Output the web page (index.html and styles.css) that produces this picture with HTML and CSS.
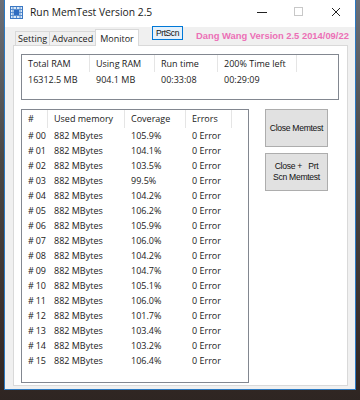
FILE: index.html
```html
<!DOCTYPE html>
<html lang="en">
<head>
<meta charset="UTF-8">
<title>Run MemTest Version 2.5</title>
<link rel="stylesheet" href="styles.css">
</head>
<body>
	<div class="window">
		<div class="titlebar">
			<svg class="app-icon" width="13" height="13" viewBox="0 0 13 13">
				<rect x="0.5" y="0.5" width="12" height="12" fill="#dbe9f7" stroke="#3b78c4"/>
				<path d="M3 1v11M6.5 1v11M10 1v11M1 3.5h11M1 6.5h11M1 9.5h11" stroke="#5b8fd0" stroke-width="1"/>
				<rect x="4" y="4" width="5" height="5" fill="#2f6cc0"/>
			</svg>
			<span class="title">Run MemTest Version 2.5</span>
			<div class="controls">
				<svg width="10" height="10" viewBox="0 0 10 10"><path d="M0 5.5h10" stroke="#222" stroke-width="1"/></svg>
				<svg width="10" height="10" viewBox="0 0 10 10"><rect x="0.5" y="0.5" width="8" height="8" fill="none" stroke="#c8c8c8"/></svg>
				<svg width="10" height="10" viewBox="0 0 10 10"><path d="M1 1l8 8M9 1l-8 8" stroke="#222" stroke-width="1"/></svg>
			</div>
		</div>

		<div class="client">
			<div class="tabrow">
				<div class="tabs">
					<div class="tab">Setting</div>
					<div class="tab">Advanced</div>
					<div class="tab active">Monitor</div>
				</div>
				<button class="prtscn">PrtScn</button>
				<span class="version">Dang Wang Version 2.5 2014/09/22</span>
			</div>

			<div class="panel">
				<div class="info">
					<div class="info-head">
						<span>Total RAM</span><span>Using RAM</span><span>Run time</span><span>200% Time left</span><span></span>
					</div>
					<div class="info-vals">
						<span>16312.5 MB</span><span>904.1 MB</span><span>00:33:08</span><span>00:29:09</span><span></span>
					</div>
				</div>

				<div class="lower">
					<div class="list">
						<div class="list-head">
							<span>#</span><span>Used memory</span><span>Coverage</span><span>Errors</span><span></span>
						</div>
						<div class="row"><span># 00</span><span>882 MBytes</span><span>105.9%</span><span>0 Error</span></div>
						<div class="row"><span># 01</span><span>882 MBytes</span><span>104.1%</span><span>0 Error</span></div>
						<div class="row"><span># 02</span><span>882 MBytes</span><span>103.5%</span><span>0 Error</span></div>
						<div class="row"><span># 03</span><span>882 MBytes</span><span>99.5%</span><span>0 Error</span></div>
						<div class="row"><span># 04</span><span>882 MBytes</span><span>104.2%</span><span>0 Error</span></div>
						<div class="row"><span># 05</span><span>882 MBytes</span><span>106.2%</span><span>0 Error</span></div>
						<div class="row"><span># 06</span><span>882 MBytes</span><span>105.9%</span><span>0 Error</span></div>
						<div class="row"><span># 07</span><span>882 MBytes</span><span>106.0%</span><span>0 Error</span></div>
						<div class="row"><span># 08</span><span>882 MBytes</span><span>104.2%</span><span>0 Error</span></div>
						<div class="row"><span># 09</span><span>882 MBytes</span><span>104.7%</span><span>0 Error</span></div>
						<div class="row"><span># 10</span><span>882 MBytes</span><span>105.1%</span><span>0 Error</span></div>
						<div class="row"><span># 11</span><span>882 MBytes</span><span>106.0%</span><span>0 Error</span></div>
						<div class="row"><span># 12</span><span>882 MBytes</span><span>101.7%</span><span>0 Error</span></div>
						<div class="row"><span># 13</span><span>882 MBytes</span><span>103.4%</span><span>0 Error</span></div>
						<div class="row"><span># 14</span><span>882 MBytes</span><span>103.2%</span><span>0 Error</span></div>
						<div class="row"><span># 15</span><span>882 MBytes</span><span>106.4%</span><span>0 Error</span></div>
					</div>

					<div class="actions">
						<button class="btn">Close Memtest</button>
						<button class="btn">Close +&nbsp;&nbsp;&nbsp;Prt<br>Scn Memtest</button>
					</div>
				</div>
			</div>
		</div>
	</div>
</body>
</html>
```

FILE: styles.css
```css
body {
	margin: 0;
	padding: 0;
	width: 360px;
	height: 400px;
	overflow: hidden;
	background: linear-gradient(180deg, #6a6f78 0%, #4a4744 40%, #3b2f2b 80%, #2e2522 100%);
	font-family: "Open Sans", "Noto Sans", sans-serif;
	font-size: 9px;
	color: #1a1a1a;
}

.window {
	margin-left: 4px;
	width: 350px;
	height: 389px;
	background-color: #f0f0f0;
	border: 1px solid #2b79c2;
	border-top: none;
	display: flex;
	flex-direction: column;
}

/* title bar */
.titlebar {
	height: 27px;
	background-color: white;
	display: flex;
	align-items: center;
	padding-left: 5px;
}

.app-icon {
	margin-right: 7px;
	margin-top: -3px;
}

.title {
	font-size: 10.3px;
	margin-top: -3px;
}

.controls {
	margin-left: auto;
	display: flex;
	gap: 27px;
	padding-right: 14px;
	margin-top: -4px;
}

/* tabs */
.client {
	flex: 1;
	display: flex;
	flex-direction: column;
	padding: 0 7px 3px 8px;
}

.tabrow {
	height: 18px;
	display: flex;
	align-items: flex-end;
	position: relative;
}

.tabs {
	display: flex;
	align-items: flex-end;
	margin-left: 2px;
}

.tab {
	height: 13px;
	line-height: 13px;
	padding: 0 2px;
	border: 1px solid #d9d9d9;
	border-bottom: none;
	border-right: none;
	background-color: #f0f0f0;
}

.tab.active {
	height: 16px;
	line-height: 18px;
	padding: 0 4px;
	background-color: white;
	border-right: 1px solid #d9d9d9;
	margin-bottom: -1px;
	position: relative;
	z-index: 1;
}

.prtscn {
	position: absolute;
	left: 139px;
	top: -1px;
	width: 31px;
	height: 14px;
	padding: 0;
	font-family: "Liberation Sans", Arial, sans-serif;
	font-size: 8.5px;
	letter-spacing: -0.4px;
	background-color: #e5f1fb;
	border: 1px solid #0078d7;
	color: #111;
}

.version {
	position: absolute;
	left: 183px;
	top: 3px;
	white-space: nowrap;
	font-family: "Liberation Sans", Arial, sans-serif;
	font-weight: bold;
	font-size: 9.4px;
	color: #ec6fb6;
}

/* tab page */
.panel {
	flex: 1;
	background-color: white;
	border: 1px solid #d9d9d9;
	padding: 8px 8px 2px 7px;
	display: flex;
	flex-direction: column;
	gap: 9px;
}

.info {
	width: 316px;
	height: 44px;
	border: 1px solid #828790;
}

.info-head,
.info-vals {
	display: grid;
	grid-template-columns: 68px 65px 63px 79px 1fr;
}

.info-head span {
	height: 17px;
	line-height: 17px;
	padding-left: 6px;
	border-right: 1px solid #e5e5e5;
}

.info-head span:last-child {
	border-right: none;
}

.info-vals span {
	padding-left: 6px;
	line-height: 16px;
}

.lower {
	flex: 1;
	display: flex;
	gap: 16px;
}

.list {
	width: 226px;
	border: 1px solid #828790;
}

.list-head,
.row {
	display: grid;
	grid-template-columns: 26px 77px 61px 46px 1fr;
}

.list-head span {
	height: 18px;
	line-height: 18px;
	padding-left: 6px;
	border-right: 1px solid #e5e5e5;
}

.list-head span:last-child {
	border-right: none;
}

.row {
	height: 15px;
	line-height: 15px;
}

.row span {
	padding-left: 6px;
}

.row span:first-child {
	letter-spacing: -0.2px;
	white-space: nowrap;
}

.actions {
	display: flex;
	flex-direction: column;
	gap: 6px;
}

.btn {
	width: 63px;
	height: 38px;
	padding: 0;
	background-color: #e1e1e1;
	border: 1px solid #adadad;
	font-family: "Liberation Sans", Arial, sans-serif;
	font-size: 8.6px;
	letter-spacing: -0.3px;
	line-height: 11px;
	color: #111;
}
```
